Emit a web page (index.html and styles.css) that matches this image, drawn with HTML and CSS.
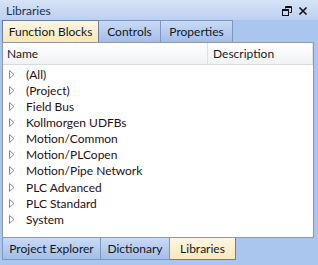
FILE: index.html
```html
<!DOCTYPE html>
<html>
<head>
<meta charset="utf-8">
<link rel="stylesheet" href="styles.css">
</head>
<body>
<div class="window">
  <div class="titlebar">
    <span class="title">Libraries</span>
    <span class="ticons">
      <svg width="10" height="10" viewBox="0 0 10 10" class="ico">
        <path d="M3.5 0.5h6v6h-2M3.5 0.5v2M3.5 1.5h6" fill="none" stroke="#111" stroke-width="1"/>
        <rect x="0.5" y="3.5" width="6" height="6" fill="none" stroke="#111" stroke-width="1"/>
        <path d="M0.5 4.5h6" stroke="#111" stroke-width="1"/>
      </svg>
      <svg width="10" height="10" viewBox="0 0 10 10" class="ico">
        <path d="M1.5 1.5l7 7M8.5 1.5l-7 7" stroke="#111" stroke-width="1.6"/>
      </svg>
    </span>
  </div>
  <div class="tabs">
    <div class="tab active">Function Blocks</div>
    <div class="tab">Controls</div>
    <div class="tab">Properties</div>
  </div>
  <div class="panel">
    <div class="header">
      <div class="col name">Name</div>
      <div class="col desc">Description</div>
    </div>
    <div class="rows">
      <div class="row"><svg class="arrow" width="6" height="9" viewBox="0 0 6 9"><path d="M0.5 0.5v8l4.5-4z" fill="#fff" stroke="#8c8c8c"/></svg>(All)</div>
      <div class="row"><svg class="arrow" width="6" height="9" viewBox="0 0 6 9"><path d="M0.5 0.5v8l4.5-4z" fill="#fff" stroke="#8c8c8c"/></svg>(Project)</div>
      <div class="row"><svg class="arrow" width="6" height="9" viewBox="0 0 6 9"><path d="M0.5 0.5v8l4.5-4z" fill="#fff" stroke="#8c8c8c"/></svg>Field Bus</div>
      <div class="row"><svg class="arrow" width="6" height="9" viewBox="0 0 6 9"><path d="M0.5 0.5v8l4.5-4z" fill="#fff" stroke="#8c8c8c"/></svg>Kollmorgen UDFBs</div>
      <div class="row"><svg class="arrow" width="6" height="9" viewBox="0 0 6 9"><path d="M0.5 0.5v8l4.5-4z" fill="#fff" stroke="#8c8c8c"/></svg>Motion/Common</div>
      <div class="row"><svg class="arrow" width="6" height="9" viewBox="0 0 6 9"><path d="M0.5 0.5v8l4.5-4z" fill="#fff" stroke="#8c8c8c"/></svg>Motion/PLCopen</div>
      <div class="row"><svg class="arrow" width="6" height="9" viewBox="0 0 6 9"><path d="M0.5 0.5v8l4.5-4z" fill="#fff" stroke="#8c8c8c"/></svg>Motion/Pipe Network</div>
      <div class="row"><svg class="arrow" width="6" height="9" viewBox="0 0 6 9"><path d="M0.5 0.5v8l4.5-4z" fill="#fff" stroke="#8c8c8c"/></svg>PLC Advanced</div>
      <div class="row"><svg class="arrow" width="6" height="9" viewBox="0 0 6 9"><path d="M0.5 0.5v8l4.5-4z" fill="#fff" stroke="#8c8c8c"/></svg>PLC Standard</div>
      <div class="row"><svg class="arrow" width="6" height="9" viewBox="0 0 6 9"><path d="M0.5 0.5v8l4.5-4z" fill="#fff" stroke="#8c8c8c"/></svg>System</div>
    </div>
  </div>
  <div class="btabs">
    <div class="btab">Project Explorer</div>
    <div class="btab">Dictionary</div>
    <div class="btab active">Libraries</div>
  </div>
</div>
</body>
</html>
```
FILE: styles.css
```css
html, body {
  margin: 0;
  padding: 0;
}
body {
  width: 318px;
  height: 265px;
  overflow: hidden;
  background: #abc6ee;
  font-family: Lato, "Noto Sans", sans-serif;
  font-size: 12px;
  color: #1b1b1b;
}
.window {
  display: flex;
  flex-direction: column;
  height: 265px;
}
.titlebar {
  height: 20px;
  display: flex;
  align-items: center;
  justify-content: space-between;
  padding: 0 10px 0 6px;
  background: linear-gradient(#d6e3f7, #bcd0f1);
  color: #1e2f4d;
  box-sizing: border-box;
}
.ticons {
  display: flex;
  gap: 6px;
  align-items: center;
  padding-top: 1px;
}
.tabs {
  height: 22px;
  display: flex;
  padding-left: 2px;
  box-sizing: border-box;
}
.tab, .btab {
  display: flex;
  align-items: center;
  justify-content: center;
  box-sizing: border-box;
  border: 1px solid #7f96bf;
  border-left: none;
  background: linear-gradient(#c9daf5, #a3bdeb);
  color: #101820;
}
.tab:first-child, .btab:first-child {
  border-left: 1px solid #7f96bf;
}
.tab {
  border-bottom: none;
}
.tab:nth-child(1) { width: 97px; }
.tab:nth-child(2) { width: 62px; }
.tab:nth-child(3) { width: 72px; }
.tab.active, .btab.active {
  background: linear-gradient(#fdf6e4, #fbe7b8);
  border-color: #6b7d9e;
}
.tab.active {
  border-left: 1px solid #6b7d9e;
}
.panel {
  margin: 0 4px 0 2px;
  height: 196px;
  box-sizing: border-box;
  border: 1px solid #8d97a6;
  background: #ffffff;
}
.header {
  display: flex;
  height: 22px;
  box-sizing: border-box;
  background: linear-gradient(#ffffff, #f1f2f4);
  border-bottom: 1px solid #d8dadd;
}
.col {
  display: flex;
  align-items: center;
  box-sizing: border-box;
  padding-left: 4px;
}
.col.name {
  width: 205px;
  border-right: 1px solid #dfe1e4;
}
.col.desc {
  flex: 1;
  padding-left: 5px;
  border-right: 1px solid #dfe1e4;
}
.rows {
  padding-top: 1px;
}
.row {
  height: 16.15px;
  display: flex;
  align-items: center;
  padding-left: 6px;
  color: #2a0d14;
}
.arrow {
  margin-right: 11px;
  flex: none;
}
.btabs {
  display: flex;
  padding-left: 2px;
  height: 22px;
}
.btab {
  border-top: none;
  height: 22px;
}
.btab:nth-child(1) { width: 99px; }
.btab:nth-child(2) { width: 69px; }
.btab:nth-child(3) { width: 66px; }
```
